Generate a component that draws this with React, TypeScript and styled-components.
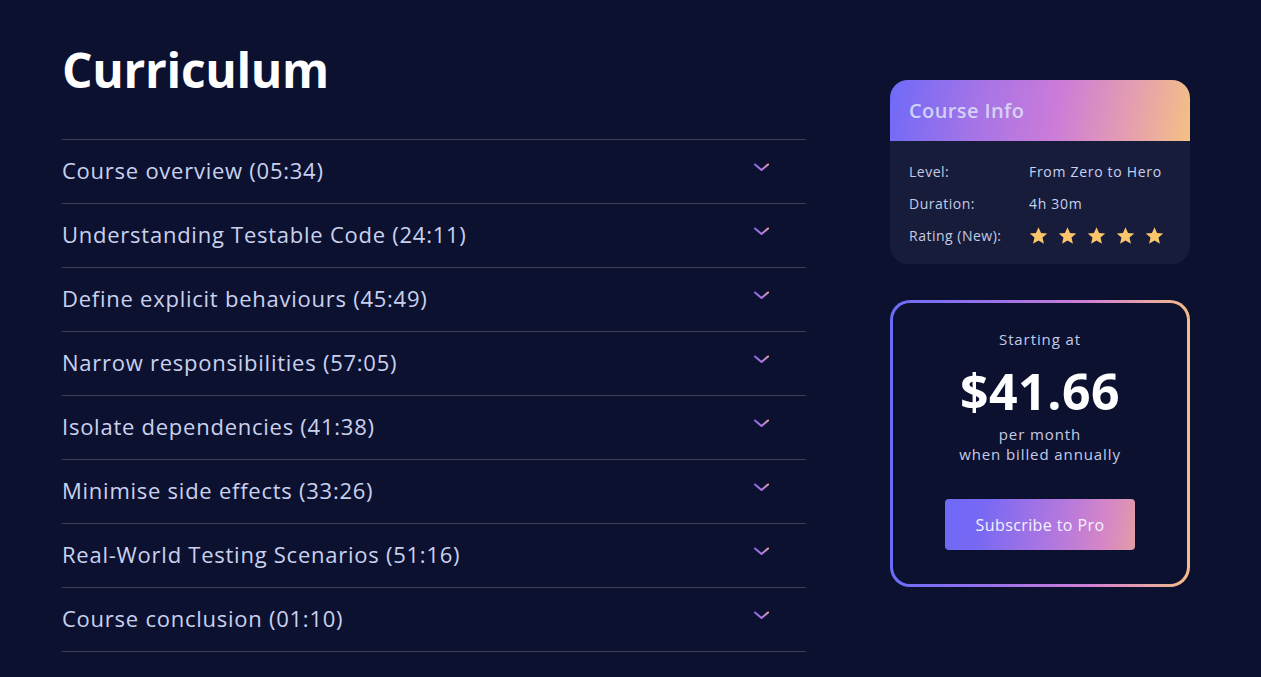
import React from "react";
import styled, { createGlobalStyle } from "styled-components";

const GlobalStyle = createGlobalStyle`
  html, body {
    margin: 0;
    padding: 0;
    background: #0d1130;
  }
  body {
    font-family: "Open Sans", "Noto Sans", sans-serif;
    -webkit-font-smoothing: antialiased;
  }
`;

const Page = styled.div`
  min-height: 677px;
  background: #0d1130;
  display: flex;
  align-items: flex-start;
  gap: 84px;
  padding: 38px 0 0 62px;
  box-sizing: border-box;
`;

const Main = styled.section`
  width: 744px;
  display: flex;
  flex-direction: column;
`;

const Title = styled.h1`
  margin: 0 0 38px;
  height: 63px;
  font-size: 48px;
  line-height: 63px;
  font-weight: 700;
  color: #ffffff;
  letter-spacing: -0.3px;
`;

const List = styled.ul`
  list-style: none;
  margin: 0;
  padding: 0;
  border-top: 1px solid #3b3e55;
`;

const Row = styled.li`
  height: 63px;
  border-bottom: 1px solid #3b3e55;
  display: flex;
  align-items: center;
  justify-content: space-between;
  padding-right: 36px;
`;

const RowLabel = styled.span`
  font-size: 22px;
  color: #c9d1ef;
  letter-spacing: 0.75px;
  margin-bottom: 3px;
`;

const Chevron = styled.svg`
  width: 17px;
  height: 10px;
  margin-bottom: 9px;
`;

const Sidebar = styled.aside`
  width: 300px;
  margin-top: 42px;
  display: flex;
  flex-direction: column;
  gap: 36px;
`;

const InfoCard = styled.div`
  border-radius: 18px;
  overflow: hidden;
  background: #161c3a;
`;

const InfoHeader = styled.div`
  height: 61px;
  display: flex;
  align-items: center;
  padding-left: 19px;
  background: linear-gradient(100deg, #6f6af8 0%, #a674e6 30%, #cb7bd9 55%, #e59fae 80%, #f5c084 100%);
`;

const InfoTitle = styled.h2`
  margin: 0;
  font-size: 20px;
  font-weight: 600;
  letter-spacing: 0.4px;
  color: rgba(220, 228, 250, 0.85);
`;

const InfoBody = styled.dl`
  margin: 0;
  padding: 20px 19px 18px;
  display: grid;
  grid-template-columns: 120px 1fr;
  row-gap: 11px;
  align-items: center;
`;

const InfoTerm = styled.dt`
  font-size: 14px;
  color: #c4cbe6;
  line-height: 21px;
  letter-spacing: 0.5px;
`;

const InfoValue = styled.dd`
  margin: 0;
  font-size: 14px;
  color: #c9d1ef;
  line-height: 21px;
  letter-spacing: 0.7px;
`;

const Stars = styled.div`
  display: flex;
  gap: 8px;
  margin-left: -1px;
`;

const Star = styled.svg`
  width: 21px;
  height: 21px;
`;

const PriceCard = styled.div`
  border-radius: 20px;
  padding: 3px;
  background: linear-gradient(90deg, #6a6cf8 0%, #9b72ea 35%, #cf7ed6 65%, #f3bc88 100%);
`;

const PriceInner = styled.div`
  border-radius: 17px;
  background: #0d1130;
  height: 281px;
  box-sizing: border-box;
  padding-top: 26px;
  display: flex;
  flex-direction: column;
  align-items: center;
`;

const PriceNote = styled.div`
  font-size: 15px;
  color: #c4cbe6;
  line-height: 20px;
  text-align: center;
  letter-spacing: 0.9px;
`;

const Price = styled.div`
  font-size: 50px;
  font-weight: 700;
  color: #ffffff;
  line-height: 66px;
  margin: 9px 0 0;
  letter-spacing: 0.5px;
`;

const Subscribe = styled.button`
  margin-top: 35px;
  width: 190px;
  height: 51px;
  border: none;
  border-radius: 4px;
  font-family: inherit;
  font-size: 16px;
  letter-spacing: 0.4px;
  color: #f4f2ff;
  background: linear-gradient(100deg, #6e6af8 0%, #7868f4 20%, #b478de 60%, #d887c4 85%, #e19ea4 100%);
  cursor: pointer;
`;

const lessons = [
  "Course overview (05:34)",
  "Understanding Testable Code (24:11)",
  "Define explicit behaviours (45:49)",
  "Narrow responsibilities (57:05)",
  "Isolate dependencies (41:38)",
  "Minimise side effects (33:26)",
  "Real-World Testing Scenarios (51:16)",
  "Course conclusion (01:10)",
];

const ChevronIcon = ({ id }: { id: string }) => (
  <Chevron viewBox="0 0 17 10" fill="none">
    <defs>
      <linearGradient id={id} x1="0" y1="0" x2="17" y2="0" gradientUnits="userSpaceOnUse">
        <stop offset="0" stopColor="#7f68f4" />
        <stop offset="0.6" stopColor="#b878e0" />
        <stop offset="1" stopColor="#f2b489" />
      </linearGradient>
    </defs>
    <path d="M2 2.5 L8.5 8 L15 2.5" stroke={`url(#${id})`} strokeWidth="2" strokeLinecap="round" strokeLinejoin="round" />
  </Chevron>
);

const StarIcon = () => (
  <Star viewBox="0 0 24 24">
    <path
      d="M12 2.5l2.9 6.6 7.1.6-5.4 4.7 1.6 7-6.2-3.7-6.2 3.7 1.6-7L2 9.7l7.1-.6z"
      fill="#fbc56c"
    />
  </Star>
);

export default function App() {
  return (
    <>
      <GlobalStyle />
      <Page>
        <Main>
          <Title>Curriculum</Title>
          <List>
            {lessons.map((l, i) => (
              <Row key={l}>
                <RowLabel>{l}</RowLabel>
                <ChevronIcon id={`chev-${i}`} />
              </Row>
            ))}
          </List>
        </Main>
        <Sidebar>
          <InfoCard>
            <InfoHeader>
              <InfoTitle>Course Info</InfoTitle>
            </InfoHeader>
            <InfoBody>
              <InfoTerm>Level:</InfoTerm>
              <InfoValue>From Zero to Hero</InfoValue>
              <InfoTerm>Duration:</InfoTerm>
              <InfoValue>4h 30m</InfoValue>
              <InfoTerm>Rating (New):</InfoTerm>
              <InfoValue>
                <Stars>
                  {[0, 1, 2, 3, 4].map((s) => (
                    <StarIcon key={s} />
                  ))}
                </Stars>
              </InfoValue>
            </InfoBody>
          </InfoCard>
          <PriceCard>
            <PriceInner>
              <PriceNote>Starting at</PriceNote>
              <Price>$41.66</Price>
              <PriceNote>
                per month
                <br />
                when billed annually
              </PriceNote>
              <Subscribe>Subscribe to Pro</Subscribe>
            </PriceInner>
          </PriceCard>
        </Sidebar>
      </Page>
    </>
  );
}
